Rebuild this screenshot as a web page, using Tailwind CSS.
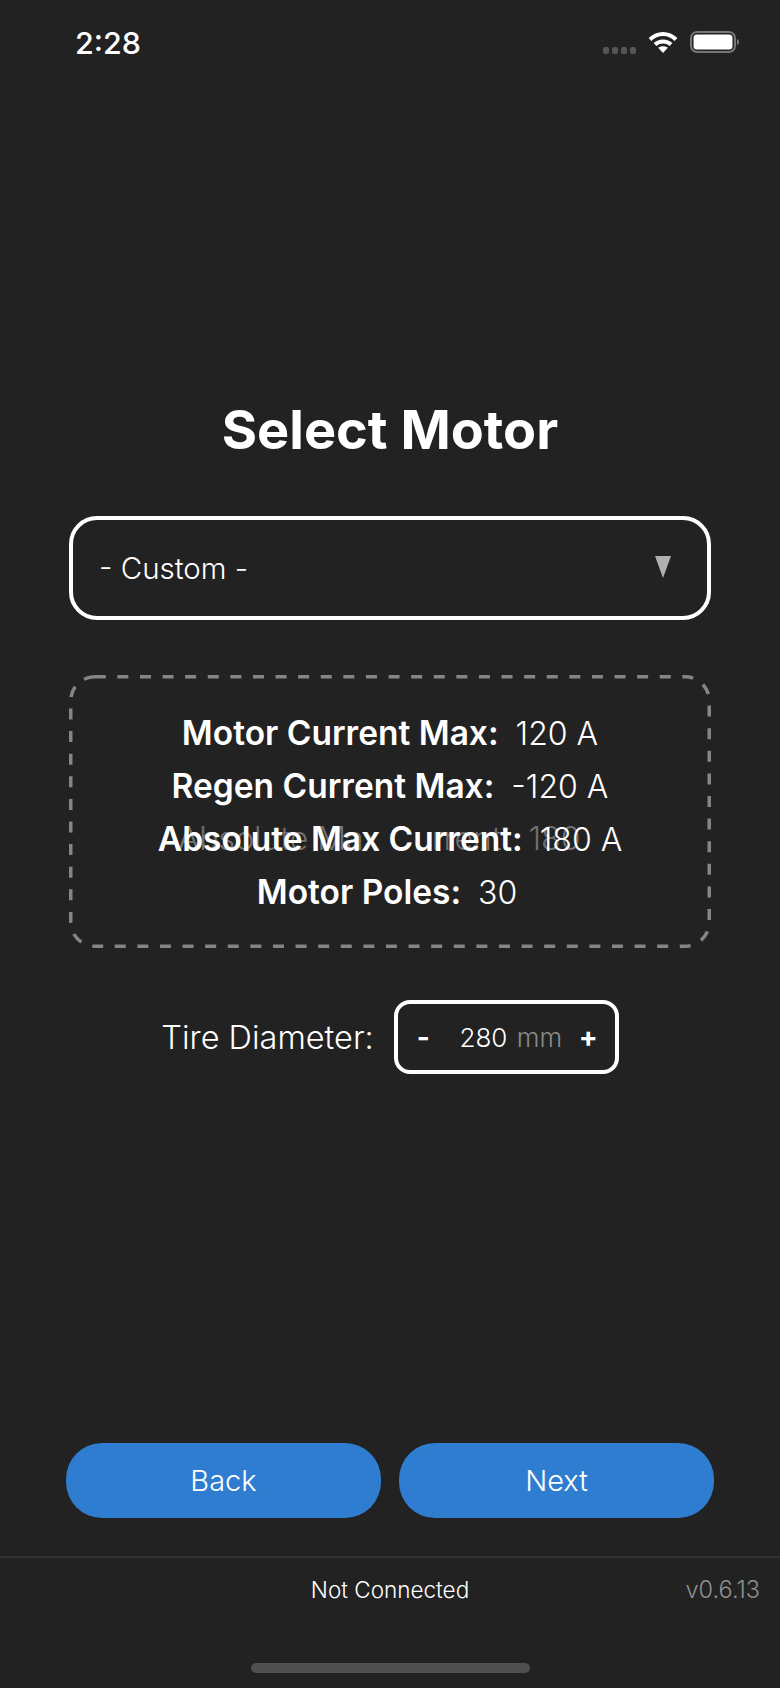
<!DOCTYPE html>
<html lang="en">
<head>
  <meta charset="UTF-8" />
  <meta name="viewport" content="width=device-width, initial-scale=1.0"/>
  <title>Select Motor</title>
  <script src="https://cdn.jsdelivr.net/npm/@tailwindcss/browser@4"></script>
</head>
<body class="bg-[#222222]">
  <div class="w-[780px] h-[1688px] flex flex-col bg-[#222222] text-white font-['Inter',sans-serif] overflow-hidden">

    <!-- Status bar -->
    <header class="h-[86px] shrink-0 flex justify-between pl-[75px] pr-[41px] pt-[26px]">
      <span class="text-[30.500px] leading-[34px] font-medium">2:28</span>
      <div class="flex items-start pt-[5px]">
        <div class="flex gap-[3px] mt-[16px] mr-[12px]">
          <span class="w-[6px] h-[7px] rounded-[2px] bg-[#555555]"></span>
          <span class="w-[6px] h-[7px] rounded-[2px] bg-[#555555]"></span>
          <span class="w-[6px] h-[7px] rounded-[2px] bg-[#555555]"></span>
          <span class="w-[6px] h-[7px] rounded-[2px] bg-[#555555]"></span>
        </div>
        <svg class="w-[30px] h-[22px] mr-[12px]" viewBox="0 0 30 22" fill="none" stroke="#fff" stroke-width="4">
          <path d="M2 8.5C9.5 1.2 20.5 1.2 28 8.5" />
          <path d="M7 13.5C11.5 9.5 18.5 9.5 23 13.5" />
          <path d="M15 22l-4.8-5.2c2.8-2 6.8-2 9.600 0z" fill="#fff" stroke="none" />
        </svg>
        <svg class="w-[49px] h-[22px]" viewBox="0 0 49 22" fill="none">
          <rect x="1" y="1" width="44" height="20" rx="6" stroke="#777777" stroke-width="2" />
          <rect x="3.500" y="3.500" width="39" height="15" rx="3.500" fill="#fff" />
          <path d="M47 8c1.500.5 2 1.700 2 3s-.5 2.500-2 3z" fill="#777777" />
        </svg>
      </div>
    </header>

    <!-- Main -->
    <main class="flex-1 flex flex-col px-[69px]">
      <h1 class="mt-[311px] text-center text-[54px] leading-[66px] font-bold">Select Motor</h1>

      <div class="mt-[53px] h-[104px] border-[4px] border-white rounded-[28px] flex items-center justify-between pl-[26px] pr-[36px]">
        <span class="text-[29.500px] font-light">- Custom -</span>
        <span class="w-0 h-0 border-x-[8.500px] border-x-transparent border-t-[22px] border-t-[#b0b0b0] mb-[2px]"></span>
      </div>

      <!-- Motor specs -->
      <div class="relative mt-[55px] h-[273px] pt-[3px] flex flex-col items-center justify-center text-[32px] leading-[52px]">
        <svg class="absolute inset-0 w-full h-full" viewBox="0 0 642 273" fill="none">
          <rect x="1.750" y="1.750" width="638.500" height="269.500" rx="24" stroke="#858585" stroke-width="3.500" stroke-dasharray="11 11.600" />
        </svg>
        <p class="relative"><span class="text-[33.500px] font-semibold">Motor Current Max:</span><span class="font-light ml-[17px]">120 A</span></p>
        <p class="relative"><span class="text-[33.500px] font-semibold">Regen Current Max:</span><span class="font-light ml-[17px]">-120 A</span></p>
        <div class="relative">
          <!-- faded copy left over from the screen transition -->
          <p class="absolute left-[20px] top-0 whitespace-nowrap font-light text-[#707070]">Absolute Max Current: &nbsp;180</p>
          <p class="relative"><span class="text-[33.500px] font-semibold">Absolute Max Current:</span><span class="font-light ml-[17px]">180 A</span></p>
        </div>
        <p class="relative mr-[6px]"><span class="text-[33.500px] font-semibold">Motor Poles:</span><span class="font-light ml-[17px]">30</span></p>
      </div>

      <!-- Tire diameter -->
      <div class="mt-[52px] flex items-center justify-center gap-[20px]">
        <span class="pt-[2px] text-[32.500px] font-light">Tire Diameter:</span>
        <div class="w-[225px] h-[74px] border-[4px] border-white rounded-[16px] flex items-center pl-[19px] pr-[17px]">
          <span class="text-[28px] font-bold">-</span>
          <span class="flex-1 pl-[13px] text-center text-[26px] font-light">280 <span class="text-[#8a8a8a] ml-[2px]">mm</span></span>
          <span class="text-[28px] font-bold">+</span>
        </div>
      </div>
    </main>

    <!-- Buttons -->
    <div class="shrink-0 flex gap-[18px] px-[66px] mb-[38px]">
      <button class="flex-1 h-[75px] rounded-[36px] bg-[#2f7dd0] text-[29px] font-light">Back</button>
      <button class="flex-1 h-[75px] rounded-[36px] bg-[#2f7dd0] text-[29px] font-light">Next</button>
    </div>

    <!-- Connection footer -->
    <footer class="relative shrink-0 h-[132px] border-t-2 border-[#333333]">
      <p class="pt-[16px] text-center text-[22.500px] leading-[32px] font-light">Not Connected</p>
      <span class="absolute right-[20px] top-[16px] text-[23.500px] leading-[32px] font-light text-[#909090]">v0.6.13</span>
      <div class="absolute bottom-[15px] left-[251px] w-[279px] h-[10px] rounded-full bg-[#4f4f4f]"></div>
    </footer>
  </div>
</body>
</html>
